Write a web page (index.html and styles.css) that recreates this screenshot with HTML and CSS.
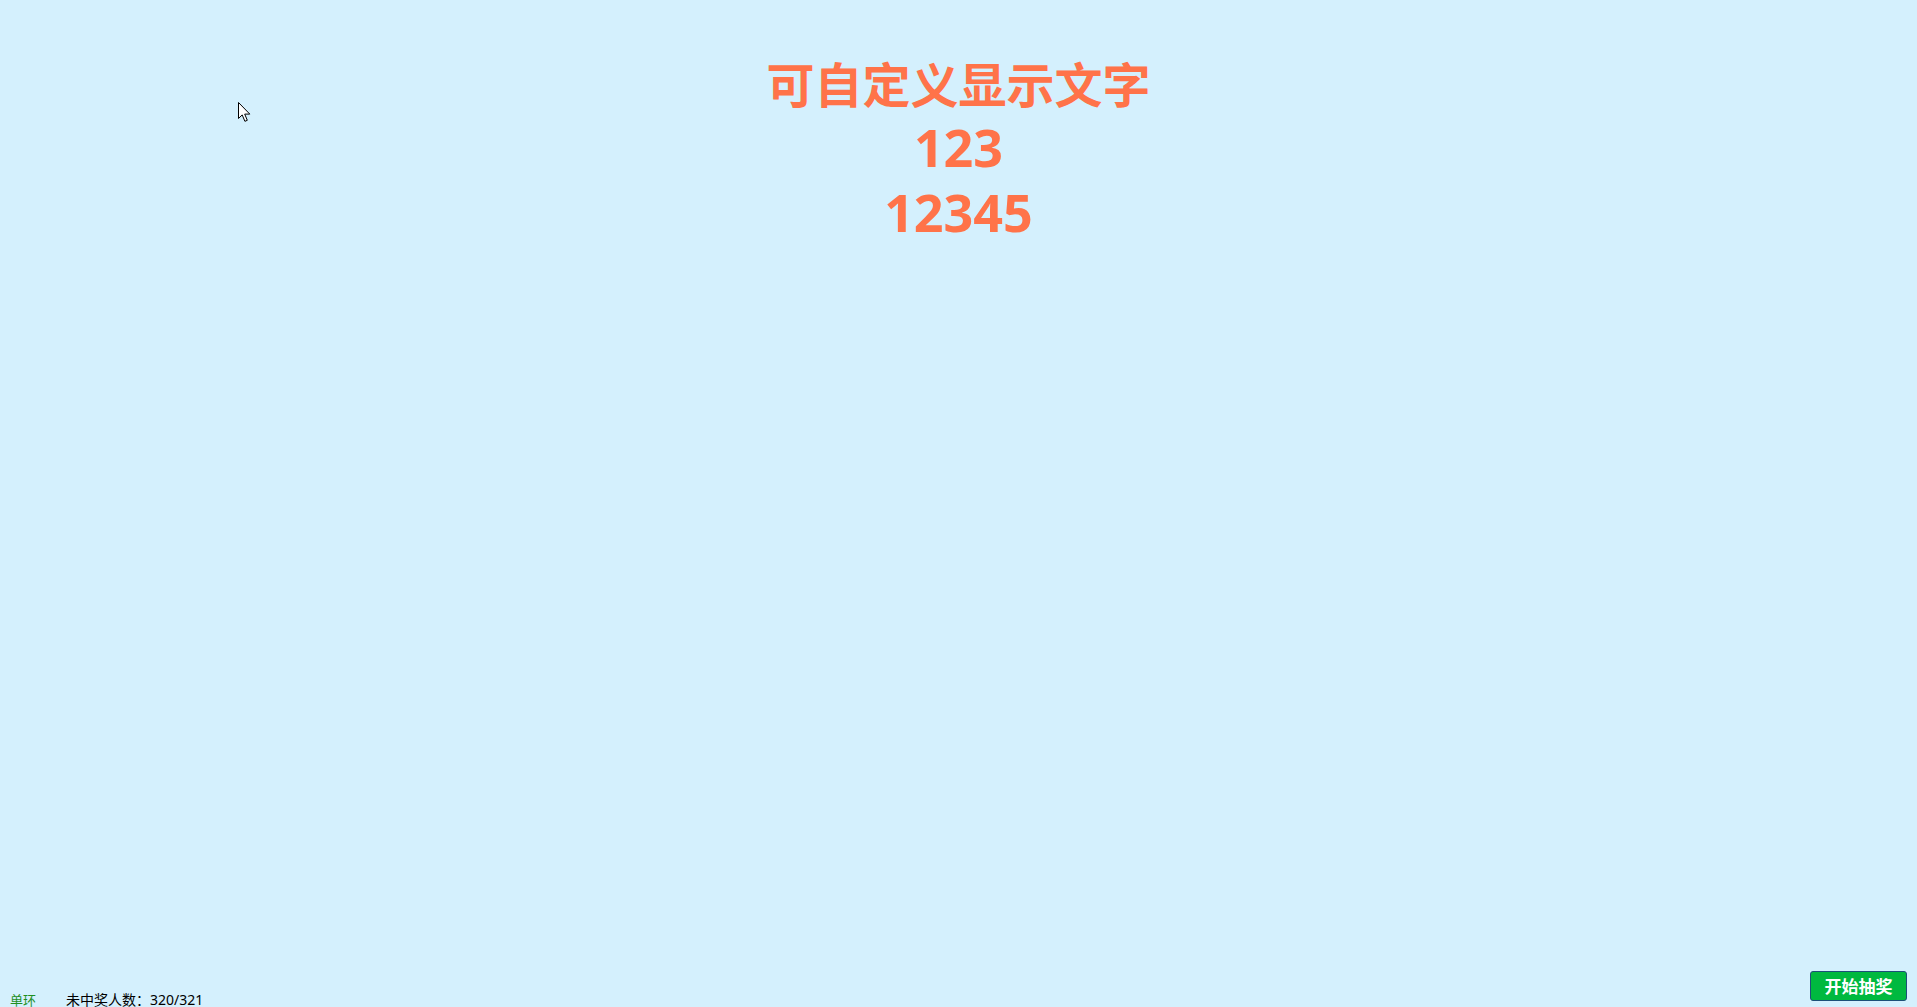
FILE: index.html
```html
<!DOCTYPE html>
<html lang="zh-CN">
<head>
<meta charset="utf-8">
<title>抽奖</title>
<link rel="stylesheet" href="styles.css">
</head>
<body>
<div class="page">
  <main class="stage">
    <div class="headline">
      <div class="line cn">可自定义显示文字</div>
      <div class="nums">
        <div class="line num">123</div>
        <div class="line num">12345</div>
      </div>
    </div>
  </main>
  <footer class="bar">
    <div class="info">
      <span class="mode">单环</span>
      <span class="count">未中奖人数：320/321</span>
    </div>
    <button class="start">开始抽奖</button>
  </footer>
</div>
<svg class="cursor" width="13" height="21" viewBox="0 0 13 21">
  <path d="M0.5 0.5 L0.5 16.5 L4.2 12.9 L6.9 19.3 L9.3 18.3 L6.7 12.1 L11.8 12.1 Z" fill="#fff" stroke="#000" stroke-width="1" stroke-linejoin="miter"/>
</svg>
</body>
</html>
```
FILE: styles.css
```css
html, body {
  margin: 0;
  padding: 0;
  height: 100%;
}
body {
  background: #d4f0fd;
  font-family: "Noto Sans", "Noto Sans CJK SC", sans-serif;
  overflow: hidden;
}
.page {
  display: flex;
  flex-direction: column;
  height: 100vh;
}
.stage {
  flex: 1;
  display: flex;
  justify-content: center;
  padding-top: 53px;
}
.headline {
  text-align: center;
  color: #ff7349;
  font-weight: 700;
  font-size: 48px;
  line-height: 64px;
}
.nums {
  margin-top: -3px;
}
.line.num {
  font-size: 52px;
  line-height: 65px;
}
.bar {
  display: flex;
  justify-content: space-between;
  align-items: flex-end;
  padding: 0 10px 6px 10px;
}
.info {
  display: flex;
  align-items: baseline;
  gap: 30px;
  line-height: 16px;
  margin-bottom: -7px;
}
.mode {
  color: #1f8f1f;
  font-size: 13px;
}
.count {
  color: #000;
  font-size: 14px;
}
.start {
  width: 97px;
  height: 30px;
  margin: 0;
  padding: 0;
  background: #00b93f;
  border: 1px solid #1d4f78;
  border-radius: 3px;
  color: #fff;
  font-family: "Noto Sans CJK SC", sans-serif;
  font-weight: 700;
  font-size: 17px;
  line-height: 28px;
}
.cursor {
  position: absolute;
  left: 238px;
  top: 102px;
}
```
